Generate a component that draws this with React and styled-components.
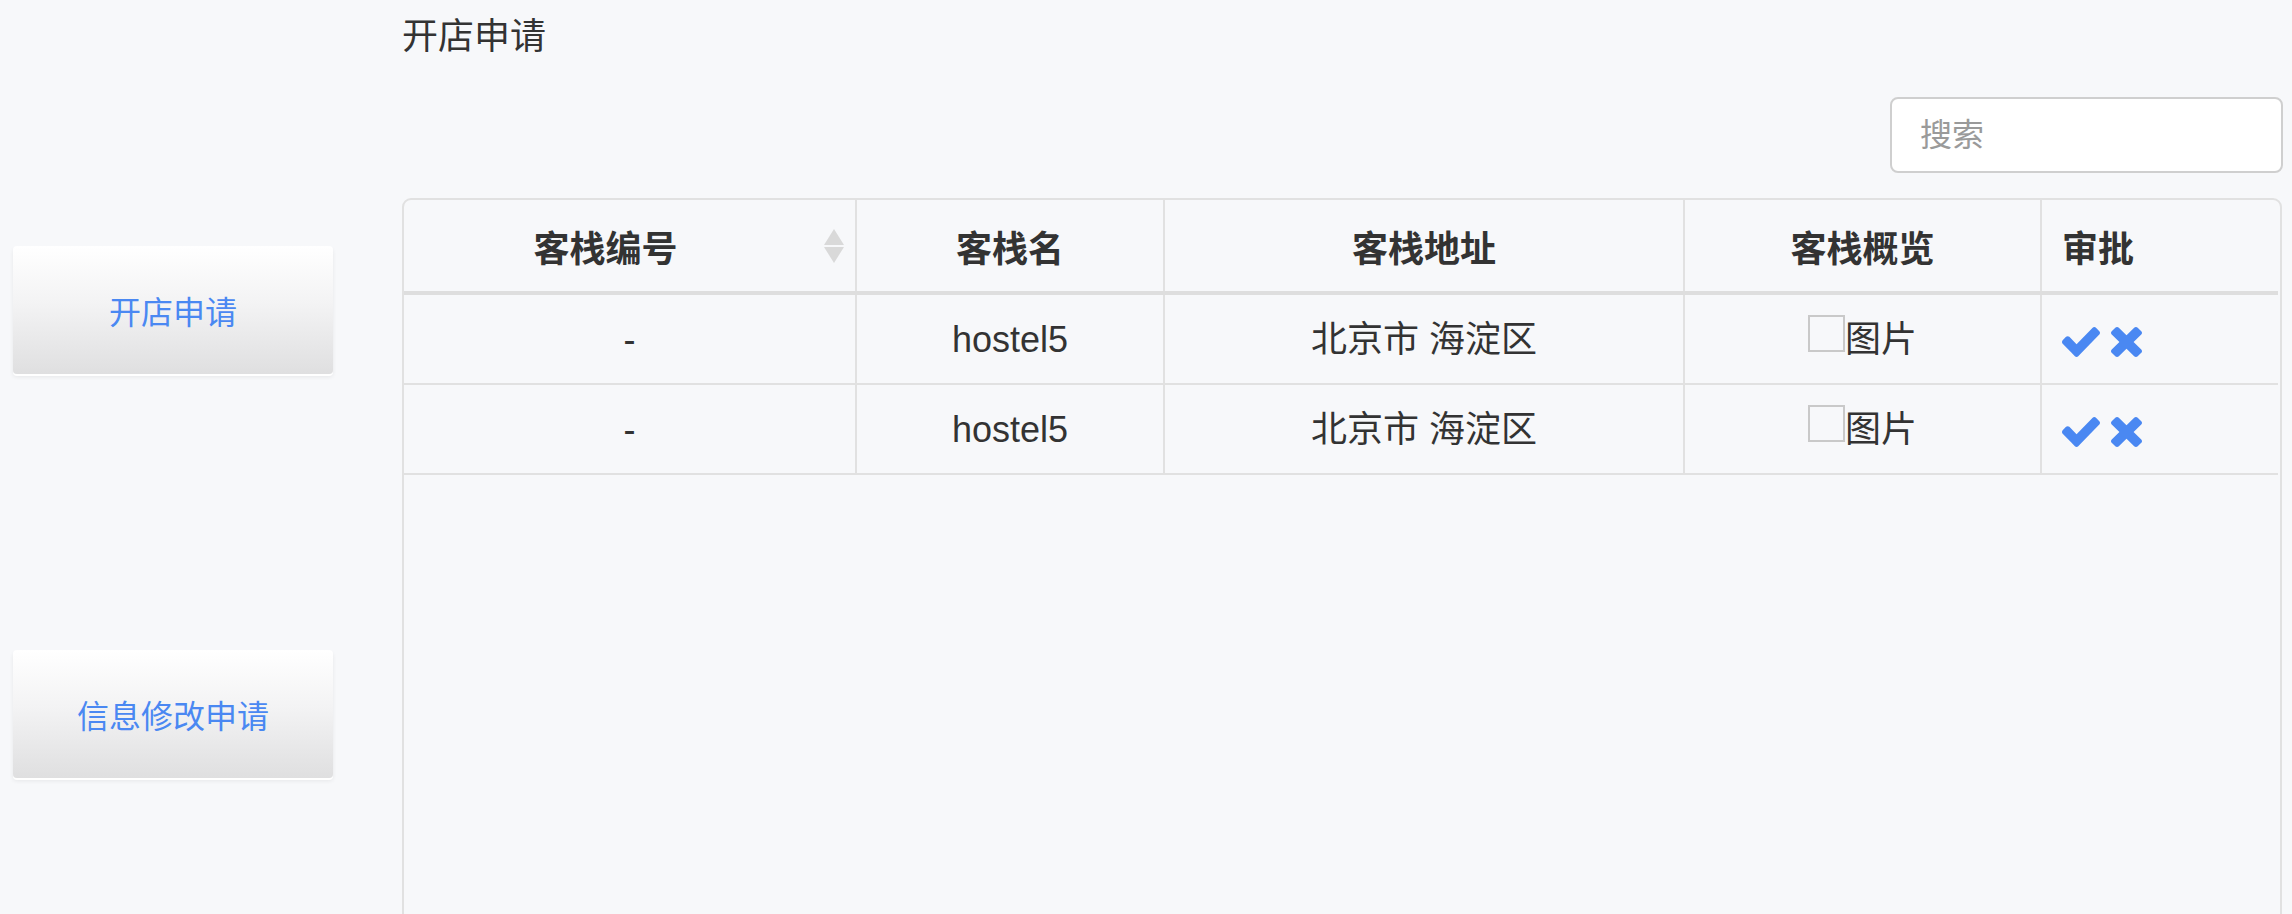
import React from "react";
import styled, { createGlobalStyle } from "styled-components";

const GlobalStyle = createGlobalStyle`
  html, body {
    margin: 0;
    padding: 0;
    overflow: hidden;
    background: #f7f8fa;
  }
  body {
    font-family: "Liberation Sans", "Noto Sans CJK SC", sans-serif;
    color: #333;
  }
`;

const Page = styled.div`
  display: flex;
  min-height: 914px;
  background: #f7f8fa;
`;

const Sidebar = styled.nav`
  width: 402px;
  flex: none;
  box-sizing: border-box;
  padding: 246px 0 0 13px;
  display: flex;
  flex-direction: column;
  gap: 276px;
`;

const NavButton = styled.button`
  width: 320px;
  height: 128px;
  border: none;
  border-radius: 4px;
  background: linear-gradient(to bottom, #ffffff 0%, #f3f3f4 45%, #dfdfe0 100%);
  box-shadow: 0 2px 0 #ffffff, 0 3px 4px rgba(0, 0, 0, 0.07);
  color: #4a88f2;
  font-family: "Liberation Sans", "Noto Sans CJK SC", sans-serif;
  font-size: 32px;
  cursor: pointer;
  padding: 0;
`;

const Main = styled.main`
  flex: 1;
  min-width: 0;
  padding-right: 10px;
  display: flex;
  flex-direction: column;
`;

const Title = styled.h1`
  margin: 10px 0 0 0;
  font-size: 36px;
  font-weight: normal;
  line-height: 54px;
  color: #333;
`;

const Toolbar = styled.div`
  display: flex;
  justify-content: flex-end;
  margin-top: 33px;
`;

const SearchInput = styled.input`
  width: 393px;
  height: 76px;
  box-sizing: border-box;
  border: 2px solid #cfcfcf;
  border-radius: 8px;
  background: #fff;
  padding: 0 0 0 28px;
  font-family: "Liberation Sans", "Noto Sans CJK SC", sans-serif;
  font-size: 32px;
  color: #333;
  margin-right: -1px;
  outline: none;
  &::placeholder {
    color: #9a9a9a;
  }
`;

const TableBox = styled.div`
  margin-top: 25px;
  height: 760px;
  border: 2px solid #e1e1e1;
  border-radius: 9px;
  box-sizing: border-box;
  overflow: hidden;
  padding-right: 2px;
`;

const Table = styled.table`
  width: 100%;
  border-collapse: collapse;
  table-layout: fixed;
  font-size: 36px;
`;

const Th = styled.th`
  position: relative;
  height: 93px;
  padding: 0;
  padding-left: ${(p) => (p.$left ? "20px" : "0")};
  padding-right: ${(p) => (p.$sortable ? "48px" : "0")};
  text-align: ${(p) => (p.$left ? "left" : "center")};
  vertical-align: middle;
  font-weight: bold;
  color: #333;
  border-bottom: 4px solid #dedede;
  border-right: ${(p) => (p.$last ? "none" : "2px solid #e1e1e1")};
  box-sizing: border-box;
`;

const Td = styled.td`
  padding: 18px 0 16px;
  padding-left: ${(p) => (p.$left ? "20px" : "0")};
  line-height: 54px;
  text-align: ${(p) => (p.$left ? "left" : "center")};
  vertical-align: middle;
  color: #333;
  border-bottom: 2px solid #e1e1e1;
  border-right: ${(p) => (p.$last ? "none" : "2px solid #e1e1e1")};
`;

const SortIcon = styled.svg`
  position: absolute;
  right: 11px;
  top: 50%;
  transform: translateY(-50%);
  width: 20px;
  height: 34px;
`;

const Preview = styled.span`
  display: inline-flex;
  align-items: flex-start;
  line-height: 54px;
`;

const BrokenImg = styled.span`
  display: inline-block;
  width: 37px;
  height: 37px;
  margin-top: 2px;
  box-sizing: border-box;
  border: 2px solid #c9c9c9;
`;

const Actions = styled.span`
  display: inline-flex;
  align-items: center;
  gap: 11px;
  vertical-align: middle;
`;

const ActionIcon = styled.svg`
  height: 30px;
  width: ${(p) => p.$w}px;
  fill: #4a88f2;
  cursor: pointer;
`;

const rows = [
  { id: "-", name: "hostel5", addr: "北京市 海淀区" },
  { id: "-", name: "hostel5", addr: "北京市 海淀区" },
];

function CheckIcon() {
  return (
    <ActionIcon $w={38} viewBox="121 334 1550 1188" preserveAspectRatio="none">
      <path d="M1671 566q0 40-28 68l-724 724-136 136q-28 28-68 28t-68-28l-136-136-362-362q-28-28-28-68t28-68l136-136q28-28 68-28t68 28l294 295 656-657q28-28 68-28t68 28l136 136q28 28 28 68z" />
    </ActionIcon>
  );
}

function TimesIcon() {
  return (
    <ActionIcon $w={31} viewBox="174 441 1188 1188" preserveAspectRatio="none">
      <path d="M1362 1397q0 40-28 68l-136 136q-28 28-68 28t-68-28l-294-294-294 294q-28 28-68 28t-68-28l-136-136q-28-28-28-68t28-68l294-294-294-294q-28-28-28-68t28-68l136-136q28-28 68-28t68 28l294 294 294-294q28-28 68-28t68 28l136 136q28 28 28 68t-28 68l-294 294 294 294q28 28 28 68z" />
    </ActionIcon>
  );
}

export default function App() {
  return (
    <>
      <GlobalStyle />
      <Page>
        <Sidebar>
          <NavButton>开店申请</NavButton>
          <NavButton>信息修改申请</NavButton>
        </Sidebar>
        <Main>
          <Title>开店申请</Title>
          <Toolbar>
            <SearchInput placeholder="搜索" />
          </Toolbar>
          <TableBox>
            <Table>
              <colgroup>
                <col style={{ width: 452 }} />
                <col style={{ width: 308 }} />
                <col style={{ width: 520 }} />
                <col style={{ width: 357 }} />
                <col />
              </colgroup>
              <thead>
                <tr>
                  <Th $sortable>
                    客栈编号
                    <SortIcon viewBox="0 0 20 34">
                      <path d="M10 0 L20 16 L0 16 Z" fill="#d9d9d9" />
                      <path d="M0 18 L20 18 L10 34 Z" fill="#d9d9d9" />
                    </SortIcon>
                  </Th>
                  <Th>客栈名</Th>
                  <Th>客栈地址</Th>
                  <Th>客栈概览</Th>
                  <Th $left $last>
                    审批
                  </Th>
                </tr>
              </thead>
              <tbody>
                {rows.map((r, i) => (
                  <tr key={i}>
                    <Td>{r.id}</Td>
                    <Td>{r.name}</Td>
                    <Td>{r.addr}</Td>
                    <Td>
                      <Preview>
                        <BrokenImg />
                        图片
                      </Preview>
                    </Td>
                    <Td $left $last>
                      <Actions>
                        <CheckIcon />
                        <TimesIcon />
                      </Actions>
                    </Td>
                  </tr>
                ))}
              </tbody>
            </Table>
          </TableBox>
        </Main>
      </Page>
    </>
  );
}
